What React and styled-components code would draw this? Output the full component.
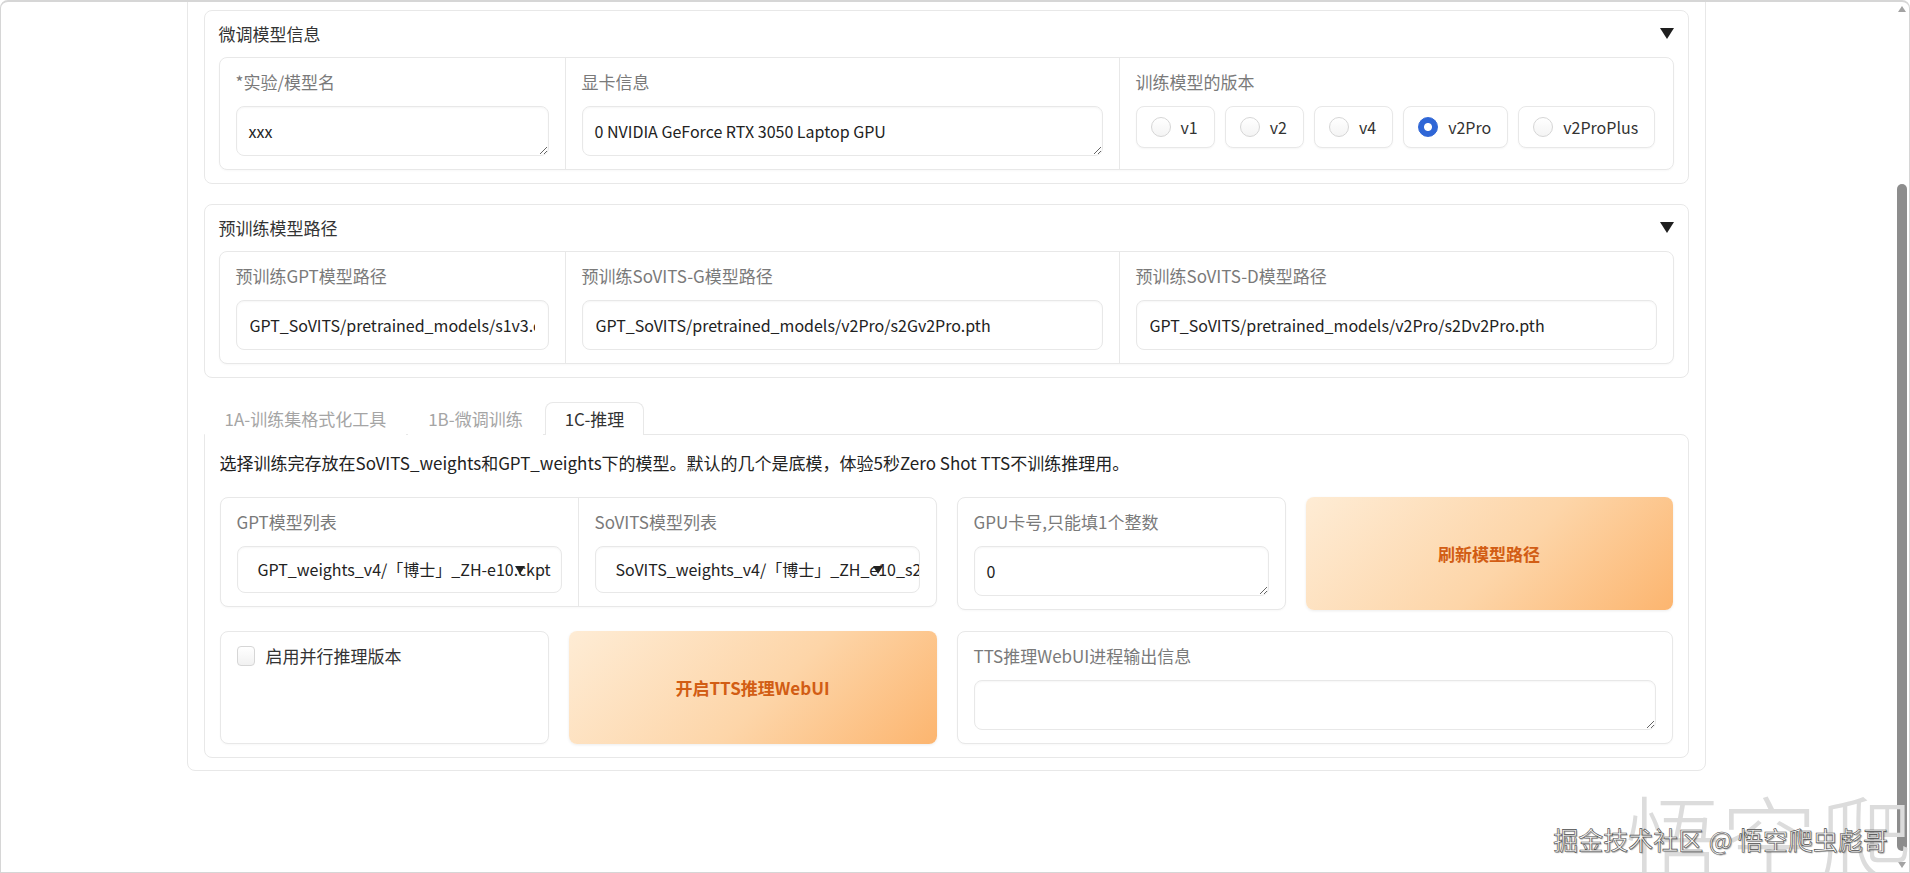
import styled, { createGlobalStyle } from "styled-components";

const GlobalStyle = createGlobalStyle`
  html, body {
    margin: 0;
    padding: 0;
    background: #fff;
    overflow: hidden;
  }
  * {
    box-sizing: border-box;
  }
  body {
    font-family: "Noto Sans CJK SC", "Noto Sans", sans-serif;
    color: #222;
  }
`;

const Frame = styled.div`
  position: relative;
  width: 1910px;
  height: 873px;
  border: 1px solid #d6d6d6;
  border-top-width: 2px;
  border-radius: 8px 8px 0 0;
  display: flex;
  overflow: hidden;
  background: #fff;
`;

const Main = styled.main`
  flex: 1;
  height: 100%;
  overflow: hidden;
  padding-right: 4px;
`;

const Outer = styled.div`
  width: 1519px;
  margin: -13px auto 0;
  border: 1px solid #e8e8e8;
  border-radius: 8px;
  padding: 20px 16px 12px;
  display: flex;
  flex-direction: column;
  gap: 20px;
`;

const Accordion = styled.section`
  border: 1px solid #e8e8e8;
  border-radius: 8px;
  padding: 11px 14px 13px;
`;

const AccHead = styled.div`
  display: flex;
  justify-content: space-between;
  align-items: center;
  height: 22px;
  margin-bottom: 13px;
  font-size: 17px;
  color: #333;
`;

const Box = styled.div`
  display: flex;
  align-items: ${(p) => (p.$top ? "flex-start" : "stretch")};
  border: 1px solid #e8e8e8;
  border-radius: 8px;
  background: #fff;
  box-shadow: 0 1px 2px rgba(0, 0, 0, 0.03);
  flex: ${(p) => (p.$w ? `0 0 ${p.$w}px` : "1")};
  min-width: 0;
`;

const Cell = styled.div`
  flex: ${(p) => (p.$w ? `0 0 ${p.$w}px` : "1")};
  min-width: 0;
  padding: 13px 16px 13px;
  border-left: ${(p) => (p.$divider ? "1px solid #e8e8e8" : "none")};
`;

const Label = styled.div`
  font-size: 17px;
  line-height: 22px;
  color: #7a7a7a;
  margin-bottom: 13px;
  white-space: nowrap;
`;

const TextArea = styled.textarea`
  display: block;
  width: 100%;
  height: 50px;
  resize: vertical;
  overflow: hidden;
  border: 1px solid #e8e8e8;
  border-radius: 8px;
  padding: 13px 12px;
  font-family: inherit;
  font-size: 16px;
  line-height: 22px;
  color: #222;
  background: #fff;
  box-shadow: inset 0 1px 2px rgba(0, 0, 0, 0.04);
  outline: none;
`;

const TextInput = styled.input`
  display: block;
  width: 100%;
  height: 50px;
  border: 1px solid #e8e8e8;
  border-radius: 8px;
  padding: 0 13px;
  font-family: inherit;
  font-size: 16px;
  color: #222;
  background: #fff;
  box-shadow: inset 0 1px 2px rgba(0, 0, 0, 0.04);
  outline: none;
`;

const Dropdown = styled.div`
  position: relative;
  height: 47px;
  border: 1px solid #e8e8e8;
  border-radius: 8px;
  padding: 0 12px 0 20px;
  font-size: 16px;
  line-height: 45px;
  color: #222;
  white-space: nowrap;
  overflow: hidden;
  background: #fff;
  box-shadow: inset 0 1px 2px rgba(0, 0, 0, 0.04);
`;

const DropArrow = styled.svg`
  position: absolute;
  right: 36px;
  top: 19px;
`;

const RadioRow = styled.div`
  display: flex;
  gap: 10px;
`;

const RadioPill = styled.label`
  display: flex;
  align-items: center;
  gap: 10px;
  height: 42px;
  padding: 0 16px 0 14px;
  border: 1px solid #e8e8e8;
  border-radius: 8px;
  background: #fff;
  box-shadow: 0 1px 2px rgba(0, 0, 0, 0.04);
  font-size: 16px;
  color: #333;
`;

const RadioDot = styled.span`
  width: 20px;
  height: 20px;
  border-radius: 50%;
  border: 1px solid ${(p) => (p.$on ? "#2f66d6" : "#d6d6d6")};
  background: ${(p) =>
    p.$on
      ? "radial-gradient(circle, #fff 0 3.5px, #2f66d6 4.5px)"
      : "linear-gradient(#fff, #f4f4f4)"};
`;

const TabBar = styled.div`
  display: flex;
  gap: 2px;
  height: 33px;
  margin: 4px 0 -1px 1px;
  position: relative;
  z-index: 1;
`;

const Tab = styled.div`
  padding: 0 19px;
  height: 33px;
  line-height: 31px;
  font-size: 17px;
  color: ${(p) => (p.$active ? "#333" : "#a5a5a5")};
  background: #fff;
  border: 1px solid ${(p) => (p.$active ? "#e8e8e8" : "transparent")};
  border-bottom: none;
  border-radius: 8px 8px 0 0;
`;

const TabPanel = styled.div`
  border: 1px solid #e8e8e8;
  border-radius: 0 8px 8px 8px;
  padding: 17px 15px 13px;
  display: flex;
  flex-direction: column;
`;

const Desc = styled.p`
  margin: 0 0 23px;
  font-size: 17px;
  line-height: 22px;
  color: #222;
`;

const Row = styled.div`
  display: flex;
  gap: 20px;
  align-items: flex-start;
  & + & {
    margin-top: 21px;
    align-items: stretch;
  }
`;

const ActionButton = styled.button`
  flex: ${(p) => (p.$w ? `0 0 ${p.$w}px` : "1")};
  align-self: stretch;
  border: none;
  border-radius: 8px;
  background: linear-gradient(135deg, #feecd5 0%, #fdd5a8 55%, #fcb56f 100%);
  color: #d25d14;
  font-family: inherit;
  font-weight: 700;
  font-size: 17px;
  box-shadow: 0 1px 3px rgba(0, 0, 0, 0.08);
`;

const CheckLine = styled.label`
  display: flex;
  align-items: center;
  gap: 11px;
  font-size: 17px;
  line-height: 22px;
  color: #333;
`;

const CheckBox = styled.span`
  width: 18px;
  height: 20px;
  border: 1px solid #d6d6d6;
  border-radius: 4px;
  background: linear-gradient(#fff, #f1f1f1);
`;

const ScrollRail = styled.div`
  width: 14px;
  display: flex;
  flex-direction: column;
  align-items: center;
  padding: 4px 0;
`;

const Thumb = styled.div`
  width: 10px;
  height: 667px;
  margin-top: 172px;
  border-radius: 5px;
  background: #8d8d8d;
`;

const Spacer = styled.div`
  flex: 1;
`;

const BigMark = styled.div`
  position: absolute;
  left: 1624px;
  top: 786px;
  font-size: 96px;
  line-height: 1;
  font-weight: 300;
  color: #dcdcdc;
  white-space: nowrap;
  pointer-events: none;
`;

const SmallMark = styled.div`
  position: absolute;
  right: 21px;
  top: 820px;
  font-size: 25px;
  line-height: 34px;
  color: #f7f7f7;
  -webkit-text-stroke: 0.6px #4a4a4a;
  text-shadow: 1px 1px 1px rgba(0, 0, 0, 0.35);
  white-space: nowrap;
  pointer-events: none;
`;

const Caret = ({ w = 14, h = 11, color = "#1f1f1f" }) => (
  <svg width={w} height={h} viewBox="0 0 14 11">
    <path d="M0 0 H14 L7 11 Z" fill={color} />
  </svg>
);

const versions = ["v1", "v2", "v4", "v2Pro", "v2ProPlus"];

export default function App() {
  return (
    <>
      <GlobalStyle />
      <Frame>
        <Main>
          <Outer>
            <Accordion>
              <AccHead>
                微调模型信息
                <Caret />
              </AccHead>
              <Box>
                <Cell $w={345}>
                  <Label>*实验/模型名</Label>
                  <TextArea readOnly value="xxx" />
                </Cell>
                <Cell $w={554} $divider>
                  <Label>显卡信息</Label>
                  <TextArea readOnly value="0 NVIDIA GeForce RTX 3050 Laptop GPU" />
                </Cell>
                <Cell $divider>
                  <Label>训练模型的版本</Label>
                  <RadioRow>
                    {versions.map((v) => (
                      <RadioPill key={v}>
                        <RadioDot $on={v === "v2Pro"} />
                        {v}
                      </RadioPill>
                    ))}
                  </RadioRow>
                </Cell>
              </Box>
            </Accordion>

            <Accordion>
              <AccHead>
                预训练模型路径
                <Caret />
              </AccHead>
              <Box>
                <Cell $w={345}>
                  <Label>预训练GPT模型路径</Label>
                  <TextInput readOnly value="GPT_SoVITS/pretrained_models/s1v3.ckpt" />
                </Cell>
                <Cell $w={554} $divider>
                  <Label>预训练SoVITS-G模型路径</Label>
                  <TextInput readOnly value="GPT_SoVITS/pretrained_models/v2Pro/s2Gv2Pro.pth" />
                </Cell>
                <Cell $divider>
                  <Label>预训练SoVITS-D模型路径</Label>
                  <TextInput readOnly value="GPT_SoVITS/pretrained_models/v2Pro/s2Dv2Pro.pth" />
                </Cell>
              </Box>
            </Accordion>

            <div>
              <TabBar>
                <Tab>1A-训练集格式化工具</Tab>
                <Tab>1B-微调训练</Tab>
                <Tab $active>1C-推理</Tab>
              </TabBar>
              <TabPanel>
                <Desc>
                  选择训练完存放在SoVITS_weights和GPT_weights下的模型。默认的几个是底模，体验5秒Zero Shot TTS不训练推理用。
                </Desc>
                <Row>
                  <Box $w={717} $top>
                    <Cell>
                      <Label>GPT模型列表</Label>
                      <Dropdown>
                        GPT_weights_v4/「博士」_ZH-e10.ckpt
                        <DropArrow width="10" height="8" viewBox="0 0 14 11">
                          <path d="M0 0 H14 L7 11 Z" fill="#222" />
                        </DropArrow>
                      </Dropdown>
                    </Cell>
                    <Cell $divider>
                      <Label>SoVITS模型列表</Label>
                      <Dropdown>
                        SoVITS_weights_v4/「博士」_ZH_e10_s230_l32.pth
                        <DropArrow width="10" height="8" viewBox="0 0 14 11">
                          <path d="M0 0 H14 L7 11 Z" fill="#222" />
                        </DropArrow>
                      </Dropdown>
                    </Cell>
                  </Box>
                  <Box $w={329}>
                    <Cell>
                      <Label>GPU卡号,只能填1个整数</Label>
                      <TextArea readOnly value="0" />
                    </Cell>
                  </Box>
                  <ActionButton>刷新模型路径</ActionButton>
                </Row>
                <Row>
                  <Box $w={329}>
                    <Cell>
                      <CheckLine>
                        <CheckBox />
                        启用并行推理版本
                      </CheckLine>
                    </Cell>
                  </Box>
                  <ActionButton $w={368}>开启TTS推理WebUI</ActionButton>
                  <Box>
                    <Cell>
                      <Label>TTS推理WebUI进程输出信息</Label>
                      <TextArea readOnly value="" />
                    </Cell>
                  </Box>
                </Row>
              </TabPanel>
            </div>
          </Outer>
        </Main>
        <ScrollRail>
          <svg width="8" height="6" viewBox="0 0 8 6">
            <path d="M0 6 L4 0 L8 6 Z" fill="#a3a3a3" />
          </svg>
          <Thumb />
          <Spacer />
          <svg width="8" height="6" viewBox="0 0 8 6">
            <path d="M0 0 H8 L4 6 Z" fill="#a3a3a3" />
          </svg>
        </ScrollRail>
        <BigMark>悟空爬虫</BigMark>
        <SmallMark>掘金技术社区 @ 悟空爬虫彪哥</SmallMark>
      </Frame>
    </>
  );
}
